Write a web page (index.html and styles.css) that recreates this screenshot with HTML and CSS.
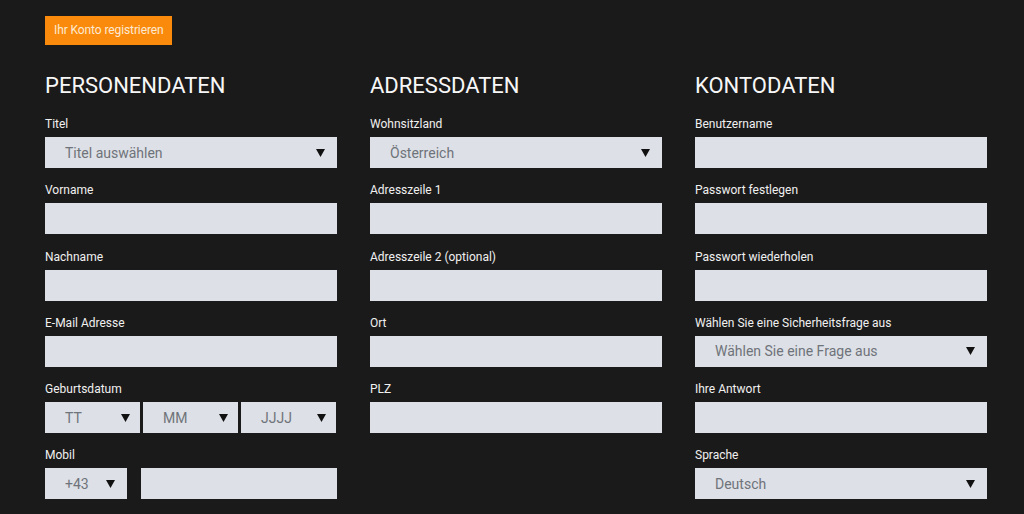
FILE: index.html
```html
<!DOCTYPE html>
<html lang="de">
<head>
<meta charset="utf-8">
<link rel="stylesheet" href="styles.css">
</head>
<body>
<div class="page">
  <div class="topbar"><span class="btn">Ihr Konto registrieren</span></div>
  <div class="cols">
    <section class="col">
      <h2>PERSONENDATEN</h2>
      <div class="field"><label>Titel</label><div class="box select"><span>Titel auswählen</span><svg class="arr" viewBox="0 0 9 8"><path d="M0 0H9L4.5 8Z"/></svg></div></div>
      <div class="field"><label>Vorname</label><div class="box"></div></div>
      <div class="field"><label>Nachname</label><div class="box"></div></div>
      <div class="field"><label>E-Mail Adresse</label><div class="box"></div></div>
      <div class="field"><label>Geburtsdatum</label>
        <div class="dates">
          <div class="box select"><span>TT</span><svg class="arr" viewBox="0 0 9 8"><path d="M0 0H9L4.5 8Z"/></svg></div>
          <div class="box select"><span>MM</span><svg class="arr" viewBox="0 0 9 8"><path d="M0 0H9L4.5 8Z"/></svg></div>
          <div class="box select"><span>JJJJ</span><svg class="arr" viewBox="0 0 9 8"><path d="M0 0H9L4.5 8Z"/></svg></div>
        </div>
      </div>
      <div class="field"><label>Mobil</label>
        <div class="mobile">
          <div class="box select code"><span>+43</span><svg class="arr" viewBox="0 0 9 8"><path d="M0 0H9L4.5 8Z"/></svg></div>
          <div class="box num"></div>
        </div>
      </div>
    </section>
    <section class="col">
      <h2>ADRESSDATEN</h2>
      <div class="field"><label>Wohnsitzland</label><div class="box select"><span>Österreich</span><svg class="arr" viewBox="0 0 9 8"><path d="M0 0H9L4.5 8Z"/></svg></div></div>
      <div class="field"><label>Adresszeile 1</label><div class="box"></div></div>
      <div class="field"><label>Adresszeile 2 (optional)</label><div class="box"></div></div>
      <div class="field"><label>Ort</label><div class="box"></div></div>
      <div class="field"><label>PLZ</label><div class="box"></div></div>
    </section>
    <section class="col">
      <h2>KONTODATEN</h2>
      <div class="field"><label>Benutzername</label><div class="box"></div></div>
      <div class="field"><label>Passwort festlegen</label><div class="box"></div></div>
      <div class="field"><label>Passwort wiederholen</label><div class="box"></div></div>
      <div class="field"><label>Wählen Sie eine Sicherheitsfrage aus</label><div class="box select"><span>Wählen Sie eine Frage aus</span><svg class="arr" viewBox="0 0 9 8"><path d="M0 0H9L4.5 8Z"/></svg></div></div>
      <div class="field"><label>Ihre Antwort</label><div class="box"></div></div>
      <div class="field"><label>Sprache</label><div class="box select"><span>Deutsch</span><svg class="arr" viewBox="0 0 9 8"><path d="M0 0H9L4.5 8Z"/></svg></div></div>
    </section>
  </div>
</div>
</body>
</html>
```
FILE: styles.css
```css
html, body {
  margin: 0;
  padding: 0;
  background: #1b1a1a;
  height: 100%;
  overflow: hidden;
}
body {
  font-family: Roboto, "Liberation Sans", sans-serif;
  color: #f2f2f2;
}
.page {
  padding: 16px 0 0 45px;
}
.topbar {
  display: flex;
}
.btn {
  display: block;
  background: #f98a0c;
  color: #fde9d2;
  font-size: 12px;
  line-height: 29px;
  height: 29px;
  padding: 0 8px 0 9px;
  white-space: nowrap;
  letter-spacing: -0.1px;
}
.cols {
  display: flex;
  gap: 33px;
  margin-top: 28px;
}
.col {
  width: 292px;
}
h2 {
  margin: 0 0 18px 0;
  font-weight: 400;
  font-size: 22px;
  line-height: 26px;
  color: #f7f7f7;
}
.field {
  margin-bottom: 15.25px;
}
label {
  display: block;
  font-size: 12px;
  line-height: 14px;
  margin-bottom: 6px;
  color: #f0f0f0;
}
.box {
  height: 31px;
  background: #dde0e6;
  box-sizing: border-box;
}
.select {
  display: flex;
  align-items: center;
  justify-content: space-between;
  padding: 0 12px 0 20px;
  color: #6f737a;
  font-size: 14px;
}
.arr {
  width: 9px;
  height: 8px;
  fill: #111;
}
.dates {
  display: flex;
  gap: 3px;
}
.dates .box {
  width: 95px;
  padding-right: 10px;
}
.mobile {
  display: flex;
  justify-content: space-between;
}
.mobile .code {
  width: 82px;
  padding-right: 12px;
}
.mobile .num {
  width: 196px;
}
```
